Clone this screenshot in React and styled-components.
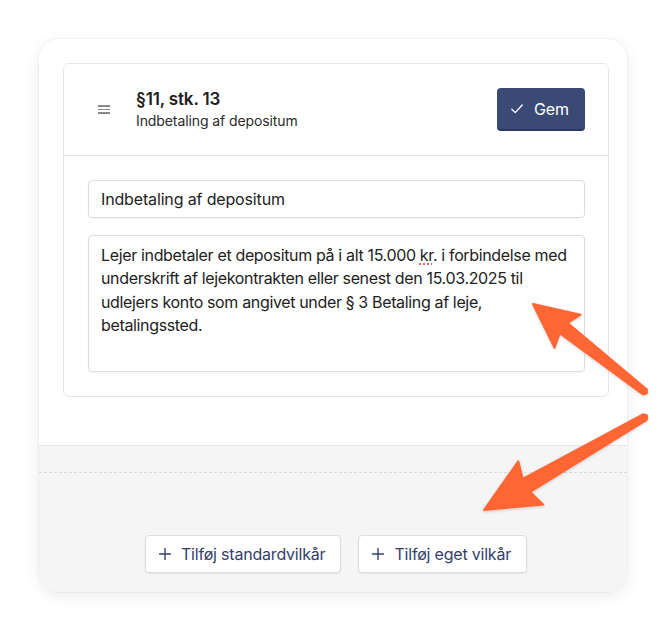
import React from "react";
import styled, { createGlobalStyle } from "styled-components";

const Global = createGlobalStyle`
  html, body { margin: 0; padding: 0; background: #ffffff; }
  body { font-family: Inter, "Noto Sans", "Liberation Sans", sans-serif; color: #222; -webkit-font-smoothing: antialiased; }
  * { box-sizing: border-box; }
`;

const Page = styled.div`
  position: relative;
  width: 666px;
  height: 631px;
  padding: 39px 0 0 39px;
`;

const Card = styled.div`
  width: 588px;
  height: 553px;
  border-radius: 20px;
  background: #ffffff;
  overflow: hidden;
  box-shadow: 0 0 0 1px rgba(0, 0, 0, 0.03), 0 4px 16px rgba(0, 0, 0, 0.08);
  display: flex;
  flex-direction: column;
`;

const TopArea = styled.div`
  padding: 24px 18px 48px 24px;
  border-bottom: 1px solid #e7e7e7;
`;

const Clause = styled.div`
  border: 1px solid #e6e6e6;
  border-radius: 6px;
  background: #fff;
`;

const ClauseHeader = styled.div`
  display: flex;
  align-items: center;
  padding: 24px 23px 24px 34px;
  border-bottom: 1px solid #e8e8e8;
`;

const Handle = styled.div`
  display: flex;
  flex-direction: column;
  gap: 2px;
  width: 12px;
  margin-right: 26px;
  span {
    display: block;
    height: 1.5px;
    background: #8a8a8a;
  }
`;

const Titles = styled.div`
  flex: 1;
  display: flex;
  flex-direction: column;
  gap: 3px;
`;

const Title = styled.div`
  font-size: 17px;
  font-weight: 600;
  color: #1e1e1e;
  line-height: 20px;
  letter-spacing: -0.15px;
`;

const Subtitle = styled.div`
  font-size: 14px;
  color: #2b2b2b;
  line-height: 18px;
  letter-spacing: -0.1px;
`;

const SaveButton = styled.button`
  display: flex;
  align-items: center;
  gap: 11px;
  height: 43px;
  padding: 0 16px 0 14px;
  border: none;
  border-bottom: 2px solid #2a3760;
  border-radius: 4px;
  background: #3a4a75;
  color: #ffffff;
  font-family: inherit;
  font-size: 16px;
  letter-spacing: -0.1px;
`;

const ClauseBody = styled.div`
  display: flex;
  flex-direction: column;
  gap: 17px;
  padding: 24px 23px 24px 24px;
`;

const Field = styled.div`
  height: 38px;
  display: flex;
  align-items: center;
  padding: 0 12px;
  border: 1px solid #dcdcdc;
  border-radius: 4px;
  box-shadow: 0 1px 2px rgba(0, 0, 0, 0.05);
  font-size: 16px;
  color: #222;
  letter-spacing: -0.15px;
`;

const TextBox = styled.div`
  height: 137px;
  padding: 8px 11px 6px 12px;
  border: 1px solid #dcdcdc;
  border-radius: 4px;
  box-shadow: 0 1px 2px rgba(0, 0, 0, 0.05);
  font-size: 16px;
  line-height: 23.3px;
  color: #222;
  letter-spacing: -0.35px;
`;

const Misspelled = styled.span`
  text-decoration: underline dotted #e0403a;
  text-underline-offset: 3px;
`;

const Footer = styled.div`
  flex: 1;
  background: #f5f5f5;
  padding-top: 26px;
  display: flex;
  flex-direction: column;
`;

const DropZone = styled.div`
  flex: 1;
  border-top: 1.5px dashed #dadada;
  padding: 62px 18px 0 24px;
  display: flex;
  justify-content: center;
  align-items: flex-start;
  gap: 17px;
`;

const AddButton = styled.button`
  display: flex;
  align-items: center;
  gap: 10px;
  height: 38px;
  padding: 0 15px 0 13px;
  background: #ffffff;
  border: 1px solid #dddddd;
  border-radius: 4px;
  box-shadow: 0 1px 2px rgba(0, 0, 0, 0.07);
  color: #33406a;
  font-family: inherit;
  font-size: 16px;
  letter-spacing: -0.2px;
`;

const Overlay = styled.svg`
  position: absolute;
  left: 0;
  top: 0;
  pointer-events: none;
  filter: drop-shadow(0 1px 1.5px rgba(0, 0, 0, 0.18));
`;

const Check = () => (
  <svg width="12" height="10" viewBox="0 0 12 10" fill="none">
    <path d="M0.8 5.2 L4.2 8.6 L11.2 1" stroke="#fff" strokeWidth="1.3" strokeLinecap="round" strokeLinejoin="round" />
  </svg>
);

const Plus = () => (
  <svg width="12" height="12" viewBox="0 0 12 12" fill="none">
    <path d="M6 0.5 V11.5 M0.5 6 H11.5" stroke="#33406a" strokeWidth="1.4" strokeLinecap="round" />
  </svg>
);

function arrowPoints(tail, tip, headLen, headHalf, shaftHead, shaftTail) {
  const dx = tip[0] - tail[0];
  const dy = tip[1] - tail[1];
  const len = Math.hypot(dx, dy);
  const ux = dx / len;
  const uy = dy / len;
  const nx = -uy;
  const ny = ux;
  const bx = tip[0] - ux * headLen;
  const by = tip[1] - uy * headLen;
  const jx = tip[0] - ux * (headLen - 5);
  const jy = tip[1] - uy * (headLen - 5);
  const pts = [
    [tip[0], tip[1]],
    [bx + nx * headHalf, by + ny * headHalf],
    [jx + nx * shaftHead, jy + ny * shaftHead],
    [tail[0] + nx * shaftTail, tail[1] + ny * shaftTail],
    [tail[0] - nx * shaftTail, tail[1] - ny * shaftTail],
    [jx - nx * shaftHead, jy - ny * shaftHead],
    [bx - nx * headHalf, by - ny * headHalf],
  ];
  return pts.map((p) => p.map((v) => v.toFixed(1)).join(",")).join(" ");
}

const Arrow = ({ tail, tip, headLen, headHalf, shaftHead, shaftTail }) => (
  <g fill="#ff6633" stroke="#ff6633" strokeWidth="2" strokeLinejoin="round">
    <polygon points={arrowPoints(tail, tip, headLen, headHalf, shaftHead, shaftTail)} />
    <circle cx={tail[0]} cy={tail[1]} r={shaftTail} stroke="none" />
  </g>
);

export default function App() {
  return (
    <>
      <Global />
      <Page>
        <Card>
          <TopArea>
            <Clause>
              <ClauseHeader>
                <Handle>
                  <span />
                  <span />
                  <span />
                </Handle>
                <Titles>
                  <Title>§11, stk. 13</Title>
                  <Subtitle>Indbetaling af depositum</Subtitle>
                </Titles>
                <SaveButton>
                  <Check />
                  Gem
                </SaveButton>
              </ClauseHeader>
              <ClauseBody>
                <Field>Indbetaling af depositum</Field>
                <TextBox role="textbox">
                  Lejer indbetaler et depositum på i alt 15.000 <Misspelled>kr</Misspelled>. i forbindelse med
                  underskrift af lejekontrakten eller senest den 15.03.2025 til udlejers konto som angivet
                  under § 3 Betaling af leje, betalingssted.
                </TextBox>
              </ClauseBody>
            </Clause>
          </TopArea>
          <Footer>
            <DropZone>
              <AddButton>
                <Plus />
                Tilføj standardvilkår
              </AddButton>
              <AddButton>
                <Plus />
                Tilføj eget vilkår
              </AddButton>
            </DropZone>
          </Footer>
        </Card>
        <Overlay width="666" height="631" viewBox="0 0 666 631">
          <Arrow tail={[645, 392]} tip={[533, 304]} headLen={44} headHalf={21} shaftHead={6.5} shaftTail={3} />
          <Arrow tail={[645, 417]} tip={[484, 510]} headLen={54} headHalf={25} shaftHead={7.5} shaftTail={3.2} />
        </Overlay>
      </Page>
    </>
  );
}
